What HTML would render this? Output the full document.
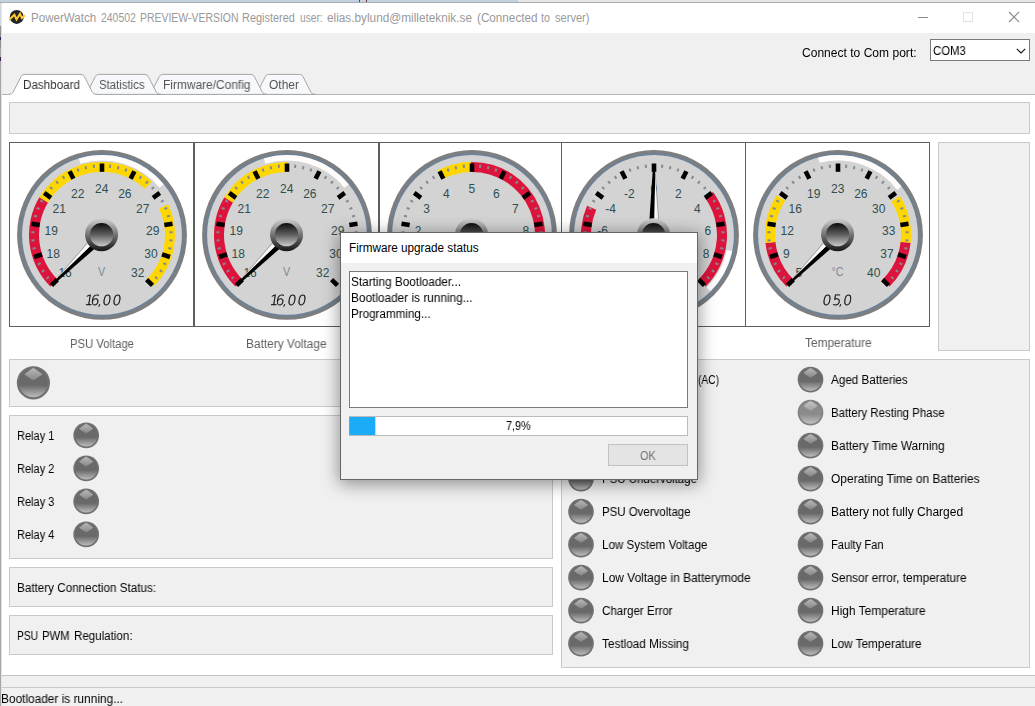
<!DOCTYPE html>
<html lang="en">
<head>
<meta charset="utf-8">
<title>PowerWatch 240502 PREVIEW-VERSION</title>
<style>

html,body{margin:0;padding:0}
body{width:1035px;height:706px;overflow:hidden;background:#fff;font-family:"Liberation Sans","DejaVu Sans",sans-serif;font-size:12px;position:relative}
#win{position:absolute;left:0;top:0;width:1035px;height:706px;overflow:hidden;background:#f0f0f0}
.t{position:absolute;white-space:nowrap;margin:0;padding:0;font-weight:400;font-family:inherit;font-size:12px;line-height:16px;transform-origin:0 50%}
.g{will-change:transform}
#topstrip{position:absolute;left:0;top:0;width:1035px;height:3px;background:#c4d1e1;border-bottom:0;box-sizing:border-box}
#topstrip:after{content:"";position:absolute;left:0;top:2px;width:1035px;height:1px;background:#a8acb0}
#topstrip i{position:absolute;top:0;width:1px;height:2px;background:#6b3a3a}
#topstrip b{position:absolute;left:518px;top:0;width:517px;height:3px;background:linear-gradient(#e6e6e6 0,#e6e6e6 66%,#a4a4a4 66%)}
#leftedge{position:absolute;left:0;top:3px;width:2px;height:703px;background:linear-gradient(90deg,#a6a6a6 0,#a6a6a6 50%,#e4e4e4 50%,#e4e4e4 100%);z-index:5}
#leftedge i{position:absolute;left:0;width:1px}
#titlebar{position:absolute;left:2px;top:3px;width:1033px;height:30px;background:#fff}
#title{position:absolute;left:-2px;top:-3px;margin:0;font-size:12px;font-weight:400}
#appicon{position:absolute;left:7px;top:6px}
.cap{position:absolute;top:0}
#toolbar{position:absolute;left:0;top:33px;width:1035px;height:41px}
#combo{position:absolute;left:930px;top:6px;width:100px;height:22px;box-sizing:border-box;border:1px solid #7a7a7a;background:#fff}
#tabs{position:absolute;left:0;top:0;width:1035px;height:95px}
#tabs svg{position:absolute;left:0;top:70px}
#content{position:absolute;left:2px;top:95px;width:1033px;height:580px;background:#fff}
#content>*{margin-left:-2px;margin-top:-95px}
#content:after{content:"";position:absolute;left:-2px;top:580px;width:1035px;height:1px;background:#c3c3c3}
.panel{position:absolute;box-sizing:border-box;border:1px solid #c9c9c9;background:#f0f0f0}
.gbox{position:absolute;top:142px;height:185px;box-sizing:border-box;border:1px solid #5e5e5e;background:#fff}
#gauges{position:absolute;left:0;top:0}
#gsvg{position:absolute;left:9px;top:142px}
#gdigits{position:absolute;left:9px;top:286px;will-change:transform}
.glab{font-size:12px;fill:#2f4f4f;font-family:"Liberation Sans","DejaVu Sans",sans-serif}
.gunit{font-size:12px;fill:#7d8a98;font-family:"Liberation Sans","DejaVu Sans",sans-serif}
.gdig{font-size:14px;fill:#000;stroke:#000;stroke-width:.4px;stroke-opacity:.8;font-family:"DejaVu Sans Light","DejaVu Sans",sans-serif}
.led{position:absolute;display:block}
#status{position:absolute;left:0;top:687px;width:1035px;height:19px;background:#f0f0f0;border-top:1px solid #c9c9c9;box-sizing:border-box}
#dlgshadow{position:absolute;left:341px;top:233px;width:356px;height:246px;box-shadow:0 3px 16px 2px rgba(0,0,0,.41)}
#dialog{position:absolute;left:340px;top:232px;width:358px;height:248px;box-sizing:border-box;border:1px solid #666;background:#f0f0f0}
#dlgtitle{position:absolute;left:0;top:0;width:356px;height:30px;background:#fff}
#log{position:absolute;left:8px;top:38px;width:339px;height:137px;box-sizing:border-box;border:1px solid #7a7a7a;background:#fff}
#prog{position:absolute;left:8px;top:183px;width:339px;height:20px;box-sizing:border-box;border:1px solid #bcbcbc;background:#fff}
#bar{position:absolute;left:-1px;top:0;width:27px;height:18px;background:linear-gradient(90deg,#5fa9d6 0,#5fa9d6 1px,#1cabf7 1px,#1cabf7 26px,#b4e2fc 26px)}
#ok{position:absolute;left:267px;top:211px;width:80px;height:22px;box-sizing:border-box;border:1px solid #c2c2c2;background:#e4e4e4;padding:0;margin:0;font:inherit}

</style>
</head>
<body>
<div id="win"><svg width="0" height="0" style="position:absolute"><defs><linearGradient id="ledRing" x1="0" y1="0" x2="0" y2="1"><stop offset="0" stop-color="#8c8c8c"/><stop offset="1" stop-color="#7a7a7a"/></linearGradient><linearGradient id="ledFill" x1="0" y1="0" x2="0" y2="1"><stop offset="0" stop-color="#696969"/><stop offset="0.58" stop-color="#696969"/><stop offset="1" stop-color="#bcbcbc"/></linearGradient><linearGradient id="ledHi" x1="0" y1="0" x2="0" y2="1"><stop offset="0" stop-color="#b9b9b9"/><stop offset="1" stop-color="#868686"/></linearGradient><linearGradient id="ledFillL" x1="0" y1="0" x2="0" y2="1"><stop offset="0" stop-color="#8b8b8b"/><stop offset="0.58" stop-color="#8b8b8b"/><stop offset="1" stop-color="#c2c2c2"/></linearGradient><linearGradient id="ledHiL" x1="0" y1="0" x2="0" y2="1"><stop offset="0" stop-color="#c6c6c6"/><stop offset="1" stop-color="#a0a0a0"/></linearGradient></defs></svg>
<div id="topstrip"><i style="left:359px"></i><i style="left:366px"></i><b></b></div>
<div id="leftedge"><i style="top:0;height:23px;background:#d3d9e0"></i><i style="top:23px;height:22px;background:#8f8f8f"></i><i style="top:34px;height:3px;background:#3b1d4e"></i><i style="top:54px;height:4px;background:#3b1d4e"></i></div>
<header id="titlebar">
<svg id="appicon" width="18" height="17" viewBox="0 0 18 17"><circle cx="7.7" cy="7.9" r="7" fill="#242424"/><path d="M0 11L5.4 5.8L7.5 10.4L11 4.9L12.9 9L16 6.2" fill="none" stroke="#ffc931" stroke-width="2" stroke-linejoin="miter" stroke-miterlimit="5"/></svg>
<h1 id="title"><span class="t" style="left:30.70px;top:10px;color:#999;transform:scaleX(0.9648);">PowerWatch</span> <span class="t" style="left:100.60px;top:10px;color:#999;transform:scaleX(0.8690);">240502</span> <span class="t" style="left:139.90px;top:10px;color:#999;transform:scaleX(0.8706);">PREVIEW-VERSION</span> <span class="t" style="left:242.00px;top:10px;color:#999;transform:scaleX(0.9099);">Registered</span> <span class="t" style="left:300.00px;top:10px;color:#999;transform:scaleX(0.8468);">user:</span> <span class="t" style="left:327.40px;top:10px;color:#999;transform:scaleX(0.9824);">elias.bylund@milleteknik.se</span> <span class="t" style="left:476.80px;top:10px;color:#999;transform:scaleX(0.9751);">(Connected</span> <span class="t" style="left:541.10px;top:10px;color:#999;transform:scaleX(0.8886);">to</span> <span class="t" style="left:554.60px;top:10px;color:#999;transform:scaleX(0.9238);">server)</span></h1>
<svg class="cap" style="left:896px" width="139" height="30" viewBox="0 0 139 30"><path d="M20 14.5H30" stroke="#8a8a8a" stroke-width="1" fill="none"/><rect x="65.5" y="9.5" width="9" height="9" stroke="#e2e2e2" stroke-width="1" fill="none"/><path d="M111 9L121 19M121 9L111 19" stroke="#8a8a8a" stroke-width="1.1" fill="none"/></svg>
</header>
<div id="toolbar">
<label class="t g" style="left:802.30px;top:12px;color:#000;letter-spacing:0.028px;">Connect to Com port:</label>
<div id="combo"><span class="t g" style="left:2.30px;top:3px;color:#000;transform:scaleX(0.9460);">COM3</span><svg width="10" height="6" viewBox="0 0 10 6" style="position:absolute;left:85px;top:8px"><path d="M0.8 0.8L5 5L9.2 0.8" fill="none" stroke="#111" stroke-width="1.1"/></svg></div>
</div>
<nav id="tabs">
<svg width="1035" height="26" viewBox="0 0 1035 26"><path d="M0 24.5H1035" stroke="#b4b4b4" stroke-width="1" fill="none"/><path d="M252.7 24.4 Q256.1 24.4 257.4 22.2 L265.3 6.6 Q266.3 4.4 268.7 4.4 L299.6 4.4 Q302.0 4.4 303.0 6.6 L310.9 22.2 Q312.2 24.4 315.6 24.4Z" fill="#f7f8fc" stroke="#a6a6a6" stroke-width="1"/><path d="M146.7 24.4 Q150.1 24.4 151.4 22.2 L159.3 6.6 Q160.3 4.4 162.7 4.4 L251.0 4.4 Q253.4 4.4 254.4 6.6 L262.3 22.2 Q263.6 24.4 267.0 24.4Z" fill="#f7f8fc" stroke="#a6a6a6" stroke-width="1"/><path d="M82.7 24.4 Q86.1 24.4 87.4 22.2 L95.3 6.6 Q96.3 4.4 98.7 4.4 L145.0 4.4 Q147.4 4.4 148.4 6.6 L156.3 22.2 Q157.6 24.4 161.0 24.4Z" fill="#f7f8fc" stroke="#a6a6a6" stroke-width="1"/><path d="M8.4 24.4 Q11.8 24.4 13.1 22.2 L21.0 6.6 Q22.0 4.4 24.4 4.4 L81.0 4.4 Q83.4 4.4 84.4 6.6 L92.3 22.2 Q93.6 24.4 97.0 24.4V26H8Z" fill="#fff" stroke="none"/><path d="M8.4 24.4 Q11.8 24.4 13.1 22.2 L21.0 6.6 Q22.0 4.4 24.4 4.4 L81.0 4.4 Q83.4 4.4 84.4 6.6 L92.3 22.2 Q93.6 24.4 97.0 24.4" fill="none" stroke="#a6a6a6" stroke-width="1"/><path d="M0 24.5H9" stroke="#b4b4b4" stroke-width="1" fill="none"/></svg>
<span class="t g" style="left:23.30px;top:77px;color:#333;transform:scaleX(0.9707);">Dashboard</span>
<span class="t g" style="left:99.30px;top:77px;color:#555;transform:scaleX(0.9497);">Statistics</span>
<span class="t g" style="left:163.20px;top:77px;color:#555;transform:scaleX(0.9940);">Firmware/Config</span>
<span class="t g" style="left:269.00px;top:77px;color:#555;">Other</span>
</nav>
<main id="content">
<div class="panel" style="left:9px;top:102px;width:1021px;height:32px"></div>
<div class="panel" style="left:938px;top:142px;width:92px;height:209px"></div>
<section id="gauges">
<div class="gbox" style="left:9px;width:185px"></div>
<div class="gbox" style="left:194px;width:185px"></div>
<div class="gbox" style="left:379px;width:183px;border-right:none"></div>
<div class="gbox" style="left:561px;width:185px;border-right:none"></div>
<div class="gbox" style="left:745px;width:185px"></div>
<svg id="gsvg" width="921" height="185" viewBox="9 142 921 185">
<defs><linearGradient id="capOuter" x1="0" y1="0" x2="0" y2="1"><stop offset="0" stop-color="#d2d2d2"/><stop offset="0.5" stop-color="#747474"/><stop offset="1" stop-color="#161616"/></linearGradient><linearGradient id="capInner" x1="0" y1="0" x2="0" y2="1"><stop offset="0" stop-color="#0c0c0c"/><stop offset="0.5" stop-color="#5e5e5e"/><stop offset="1" stop-color="#cbcbcb"/></linearGradient></defs>
<g class="gauge">
<linearGradient id="ptrW1" gradientUnits="userSpaceOnUse" x1="102.0" y1="234.9" x2="102.0" y2="240.9"><stop offset="0" stop-color="#ffffff"/><stop offset="0.5" stop-color="#f4f4f4"/><stop offset="1" stop-color="#d6d6d6"/></linearGradient>
<circle cx="102.0" cy="234.9" r="84.9" fill="#7e7e7e"/>
<circle cx="102.0" cy="234.9" r="82.1" fill="#6f8295"/>
<circle cx="102.0" cy="234.9" r="79.9" fill="#d3d3d3"/>
<path d="M78.84 158.54A79.8 79.8 0 0 1 163.69 184.28L159.51 187.70A74.4 74.4 0 0 0 80.40 163.70Z" fill="#fffcfb" />
<path d="M50.38 286.52A73.0 73.0 0 0 1 39.39 197.37L47.96 202.51A63.0 63.0 0 0 0 57.45 279.45Z" fill="#dc143c" />
<path d="M39.39 197.37A73.0 73.0 0 0 1 151.81 181.54L144.99 188.85A63.0 63.0 0 0 0 47.96 202.51Z" fill="#ffd700" />
<path d="M168.23 204.21A73.0 73.0 0 0 1 153.62 286.52L146.55 279.45A63.0 63.0 0 0 0 159.16 208.41Z" fill="#ffd700" />
<rect x="46.15" y="276.71" width="3.10" height="2.0" fill="#868a8e" transform="rotate(141.75 47.70 277.71)"/>
<rect x="41.49" y="270.03" width="3.10" height="2.0" fill="#868a8e" transform="rotate(148.50 43.04 271.03)"/>
<rect x="37.65" y="262.85" width="3.10" height="2.0" fill="#868a8e" transform="rotate(155.25 39.20 263.85)"/>
<rect x="32.63" y="247.39" width="3.10" height="2.0" fill="#868a8e" transform="rotate(168.75 34.18 248.39)"/>
<rect x="31.51" y="239.33" width="3.10" height="2.0" fill="#868a8e" transform="rotate(175.50 33.06 240.33)"/>
<rect x="31.35" y="231.19" width="3.10" height="2.0" fill="#868a8e" transform="rotate(182.25 32.90 232.19)"/>
<rect x="33.90" y="215.13" width="3.10" height="2.0" fill="#868a8e" transform="rotate(195.75 35.45 216.13)"/>
<rect x="36.56" y="207.44" width="3.10" height="2.0" fill="#868a8e" transform="rotate(202.50 38.11 208.44)"/>
<rect x="40.12" y="200.11" width="3.10" height="2.0" fill="#868a8e" transform="rotate(209.25 41.67 201.11)"/>
<rect x="49.67" y="186.96" width="3.10" height="2.0" fill="#868a8e" transform="rotate(222.75 51.22 187.96)"/>
<rect x="55.54" y="181.32" width="3.10" height="2.0" fill="#868a8e" transform="rotate(229.50 57.09 182.32)"/>
<rect x="62.03" y="176.40" width="3.10" height="2.0" fill="#868a8e" transform="rotate(236.25 63.58 177.40)"/>
<rect x="76.52" y="169.02" width="3.10" height="2.0" fill="#868a8e" transform="rotate(249.75 78.07 170.02)"/>
<rect x="84.31" y="166.66" width="3.10" height="2.0" fill="#868a8e" transform="rotate(256.50 85.86 167.66)"/>
<rect x="92.32" y="165.23" width="3.10" height="2.0" fill="#868a8e" transform="rotate(263.25 93.87 166.23)"/>
<rect x="108.58" y="165.23" width="3.10" height="2.0" fill="#868a8e" transform="rotate(276.75 110.13 166.23)"/>
<rect x="116.59" y="166.66" width="3.10" height="2.0" fill="#868a8e" transform="rotate(283.50 118.14 167.66)"/>
<rect x="124.38" y="169.02" width="3.10" height="2.0" fill="#868a8e" transform="rotate(290.25 125.93 170.02)"/>
<rect x="138.87" y="176.40" width="3.10" height="2.0" fill="#868a8e" transform="rotate(303.75 140.42 177.40)"/>
<rect x="145.36" y="181.32" width="3.10" height="2.0" fill="#868a8e" transform="rotate(310.50 146.91 182.32)"/>
<rect x="151.23" y="186.96" width="3.10" height="2.0" fill="#868a8e" transform="rotate(317.25 152.78 187.96)"/>
<rect x="160.78" y="200.11" width="3.10" height="2.0" fill="#868a8e" transform="rotate(330.75 162.33 201.11)"/>
<rect x="164.34" y="207.44" width="3.10" height="2.0" fill="#868a8e" transform="rotate(337.50 165.89 208.44)"/>
<rect x="167.00" y="215.13" width="3.10" height="2.0" fill="#868a8e" transform="rotate(344.25 168.55 216.13)"/>
<rect x="169.55" y="231.19" width="3.10" height="2.0" fill="#868a8e" transform="rotate(357.75 171.10 232.19)"/>
<rect x="169.39" y="239.33" width="3.10" height="2.0" fill="#868a8e" transform="rotate(364.50 170.94 240.33)"/>
<rect x="168.27" y="247.39" width="3.10" height="2.0" fill="#868a8e" transform="rotate(371.25 169.82 248.39)"/>
<rect x="163.25" y="262.85" width="3.10" height="2.0" fill="#868a8e" transform="rotate(384.75 164.80 263.85)"/>
<rect x="159.41" y="270.03" width="3.10" height="2.0" fill="#868a8e" transform="rotate(391.50 160.96 271.03)"/>
<rect x="154.75" y="276.71" width="3.10" height="2.0" fill="#868a8e" transform="rotate(398.25 156.30 277.71)"/>
<rect x="50.30" y="280.15" width="8.30" height="4.6" fill="#000" transform="rotate(135.00 54.45 282.45)"/>
<rect x="33.89" y="253.38" width="8.30" height="4.6" fill="#000" transform="rotate(162.00 38.04 255.68)"/>
<rect x="31.43" y="222.08" width="8.30" height="4.6" fill="#000" transform="rotate(189.00 35.58 224.38)"/>
<rect x="43.44" y="193.07" width="8.30" height="4.6" fill="#000" transform="rotate(216.00 47.59 195.37)"/>
<rect x="67.32" y="172.68" width="8.30" height="4.6" fill="#000" transform="rotate(243.00 71.47 174.98)"/>
<rect x="97.85" y="165.35" width="8.30" height="4.6" fill="#000" transform="rotate(270.00 102.00 167.65)"/>
<rect x="128.38" y="172.68" width="8.30" height="4.6" fill="#000" transform="rotate(297.00 132.53 174.98)"/>
<rect x="152.26" y="193.07" width="8.30" height="4.6" fill="#000" transform="rotate(324.00 156.41 195.37)"/>
<rect x="164.27" y="222.08" width="8.30" height="4.6" fill="#000" transform="rotate(351.00 168.42 224.38)"/>
<rect x="161.81" y="253.38" width="8.30" height="4.6" fill="#000" transform="rotate(378.00 165.96 255.68)"/>
<rect x="145.40" y="280.15" width="8.30" height="4.6" fill="#000" transform="rotate(405.00 149.55 282.45)"/>
<text x="65.10" y="277" text-anchor="middle" class="glab">16</text>
<text x="53.30" y="258" text-anchor="middle" class="glab">18</text>
<text x="51.30" y="235" text-anchor="middle" class="glab">19</text>
<text x="59.30" y="213" text-anchor="middle" class="glab">21</text>
<text x="77.80" y="198" text-anchor="middle" class="glab">22</text>
<text x="101.80" y="193" text-anchor="middle" class="glab">24</text>
<text x="124.85" y="198" text-anchor="middle" class="glab">26</text>
<text x="142.80" y="213" text-anchor="middle" class="glab">27</text>
<text x="152.70" y="235" text-anchor="middle" class="glab">29</text>
<text x="150.90" y="258" text-anchor="middle" class="glab">30</text>
<text x="137.70" y="277" text-anchor="middle" class="glab">32</text>
<text x="101.6" y="276.0" text-anchor="middle" class="gunit" transform="translate(10.16 0) scale(0.9 1)">V</text>
<g transform="rotate(135.00 102.0 234.9)"><path d="M102.0 229.3L170.5 233.9L170.5 235.9L163.0 236.1L102.0 235.1Z" fill="#000"/><path d="M102.0 235.1L163.0 236.1L102.0 240.75Z" fill="url(#ptrW1)"/><path d="M112.0 239.99L163.0 236.1" stroke="#707070" stroke-width=".55" fill="none"/></g>
<circle cx="101.55" cy="234.65" r="16.5" fill="url(#capOuter)"/>
<circle cx="101.55" cy="234.65" r="11.7" fill="url(#capInner)"/>
</g>
<g class="gauge">
<linearGradient id="ptrW2" gradientUnits="userSpaceOnUse" x1="287.0" y1="234.9" x2="287.0" y2="240.9"><stop offset="0" stop-color="#ffffff"/><stop offset="0.5" stop-color="#f4f4f4"/><stop offset="1" stop-color="#d6d6d6"/></linearGradient>
<circle cx="287.0" cy="234.9" r="84.9" fill="#7e7e7e"/>
<circle cx="287.0" cy="234.9" r="82.1" fill="#6f8295"/>
<circle cx="287.0" cy="234.9" r="79.9" fill="#d3d3d3"/>
<path d="M263.84 158.54A79.8 79.8 0 0 1 348.69 184.28L344.51 187.70A74.4 74.4 0 0 0 265.40 163.70Z" fill="#fffcfb" />
<path d="M235.38 286.52A73.0 73.0 0 0 1 224.39 197.37L232.96 202.51A63.0 63.0 0 0 0 242.45 279.45Z" fill="#dc143c" />
<path d="M224.39 197.37A73.0 73.0 0 0 1 288.07 161.91L287.93 171.91A63.0 63.0 0 0 0 232.96 202.51Z" fill="#ffd700" />
<rect x="231.15" y="276.71" width="3.10" height="2.0" fill="#868a8e" transform="rotate(141.75 232.70 277.71)"/>
<rect x="226.49" y="270.03" width="3.10" height="2.0" fill="#868a8e" transform="rotate(148.50 228.04 271.03)"/>
<rect x="222.65" y="262.85" width="3.10" height="2.0" fill="#868a8e" transform="rotate(155.25 224.20 263.85)"/>
<rect x="217.63" y="247.39" width="3.10" height="2.0" fill="#868a8e" transform="rotate(168.75 219.18 248.39)"/>
<rect x="216.51" y="239.33" width="3.10" height="2.0" fill="#868a8e" transform="rotate(175.50 218.06 240.33)"/>
<rect x="216.35" y="231.19" width="3.10" height="2.0" fill="#868a8e" transform="rotate(182.25 217.90 232.19)"/>
<rect x="218.90" y="215.13" width="3.10" height="2.0" fill="#868a8e" transform="rotate(195.75 220.45 216.13)"/>
<rect x="221.56" y="207.44" width="3.10" height="2.0" fill="#868a8e" transform="rotate(202.50 223.11 208.44)"/>
<rect x="225.12" y="200.11" width="3.10" height="2.0" fill="#868a8e" transform="rotate(209.25 226.67 201.11)"/>
<rect x="234.67" y="186.96" width="3.10" height="2.0" fill="#868a8e" transform="rotate(222.75 236.22 187.96)"/>
<rect x="240.54" y="181.32" width="3.10" height="2.0" fill="#868a8e" transform="rotate(229.50 242.09 182.32)"/>
<rect x="247.03" y="176.40" width="3.10" height="2.0" fill="#868a8e" transform="rotate(236.25 248.58 177.40)"/>
<rect x="261.52" y="169.02" width="3.10" height="2.0" fill="#868a8e" transform="rotate(249.75 263.07 170.02)"/>
<rect x="269.31" y="166.66" width="3.10" height="2.0" fill="#868a8e" transform="rotate(256.50 270.86 167.66)"/>
<rect x="277.32" y="165.23" width="3.10" height="2.0" fill="#868a8e" transform="rotate(263.25 278.87 166.23)"/>
<rect x="293.58" y="165.23" width="3.10" height="2.0" fill="#868a8e" transform="rotate(276.75 295.13 166.23)"/>
<rect x="301.59" y="166.66" width="3.10" height="2.0" fill="#868a8e" transform="rotate(283.50 303.14 167.66)"/>
<rect x="309.38" y="169.02" width="3.10" height="2.0" fill="#868a8e" transform="rotate(290.25 310.93 170.02)"/>
<rect x="323.87" y="176.40" width="3.10" height="2.0" fill="#868a8e" transform="rotate(303.75 325.42 177.40)"/>
<rect x="330.36" y="181.32" width="3.10" height="2.0" fill="#868a8e" transform="rotate(310.50 331.91 182.32)"/>
<rect x="336.23" y="186.96" width="3.10" height="2.0" fill="#868a8e" transform="rotate(317.25 337.78 187.96)"/>
<rect x="345.78" y="200.11" width="3.10" height="2.0" fill="#868a8e" transform="rotate(330.75 347.33 201.11)"/>
<rect x="349.34" y="207.44" width="3.10" height="2.0" fill="#868a8e" transform="rotate(337.50 350.89 208.44)"/>
<rect x="352.00" y="215.13" width="3.10" height="2.0" fill="#868a8e" transform="rotate(344.25 353.55 216.13)"/>
<rect x="354.55" y="231.19" width="3.10" height="2.0" fill="#868a8e" transform="rotate(357.75 356.10 232.19)"/>
<rect x="354.39" y="239.33" width="3.10" height="2.0" fill="#868a8e" transform="rotate(364.50 355.94 240.33)"/>
<rect x="353.27" y="247.39" width="3.10" height="2.0" fill="#868a8e" transform="rotate(371.25 354.82 248.39)"/>
<rect x="348.25" y="262.85" width="3.10" height="2.0" fill="#868a8e" transform="rotate(384.75 349.80 263.85)"/>
<rect x="344.41" y="270.03" width="3.10" height="2.0" fill="#868a8e" transform="rotate(391.50 345.96 271.03)"/>
<rect x="339.75" y="276.71" width="3.10" height="2.0" fill="#868a8e" transform="rotate(398.25 341.30 277.71)"/>
<rect x="235.30" y="280.15" width="8.30" height="4.6" fill="#000" transform="rotate(135.00 239.45 282.45)"/>
<rect x="218.89" y="253.38" width="8.30" height="4.6" fill="#000" transform="rotate(162.00 223.04 255.68)"/>
<rect x="216.43" y="222.08" width="8.30" height="4.6" fill="#000" transform="rotate(189.00 220.58 224.38)"/>
<rect x="228.44" y="193.07" width="8.30" height="4.6" fill="#000" transform="rotate(216.00 232.59 195.37)"/>
<rect x="252.32" y="172.68" width="8.30" height="4.6" fill="#000" transform="rotate(243.00 256.47 174.98)"/>
<rect x="282.85" y="165.35" width="8.30" height="4.6" fill="#000" transform="rotate(270.00 287.00 167.65)"/>
<rect x="313.38" y="172.68" width="8.30" height="4.6" fill="#000" transform="rotate(297.00 317.53 174.98)"/>
<rect x="337.26" y="193.07" width="8.30" height="4.6" fill="#000" transform="rotate(324.00 341.41 195.37)"/>
<rect x="349.27" y="222.08" width="8.30" height="4.6" fill="#000" transform="rotate(351.00 353.42 224.38)"/>
<rect x="346.81" y="253.38" width="8.30" height="4.6" fill="#000" transform="rotate(378.00 350.96 255.68)"/>
<rect x="330.40" y="280.15" width="8.30" height="4.6" fill="#000" transform="rotate(405.00 334.55 282.45)"/>
<text x="250.10" y="277" text-anchor="middle" class="glab">16</text>
<text x="238.30" y="258" text-anchor="middle" class="glab">18</text>
<text x="236.30" y="235" text-anchor="middle" class="glab">19</text>
<text x="244.30" y="213" text-anchor="middle" class="glab">21</text>
<text x="262.80" y="198" text-anchor="middle" class="glab">22</text>
<text x="286.80" y="193" text-anchor="middle" class="glab">24</text>
<text x="309.85" y="198" text-anchor="middle" class="glab">26</text>
<text x="327.80" y="213" text-anchor="middle" class="glab">27</text>
<text x="337.70" y="235" text-anchor="middle" class="glab">29</text>
<text x="335.90" y="258" text-anchor="middle" class="glab">30</text>
<text x="322.70" y="277" text-anchor="middle" class="glab">32</text>
<text x="286.6" y="276.0" text-anchor="middle" class="gunit" transform="translate(28.66 0) scale(0.9 1)">V</text>
<g transform="rotate(135.00 287.0 234.9)"><path d="M287.0 229.3L355.5 233.9L355.5 235.9L348.0 236.1L287.0 235.1Z" fill="#000"/><path d="M287.0 235.1L348.0 236.1L287.0 240.75Z" fill="url(#ptrW2)"/><path d="M297.0 239.99L348.0 236.1" stroke="#707070" stroke-width=".55" fill="none"/></g>
<circle cx="286.55" cy="234.65" r="16.5" fill="url(#capOuter)"/>
<circle cx="286.55" cy="234.65" r="11.7" fill="url(#capInner)"/>
</g>
<g class="gauge">
<linearGradient id="ptrW3" gradientUnits="userSpaceOnUse" x1="472.0" y1="234.9" x2="472.0" y2="240.9"><stop offset="0" stop-color="#ffffff"/><stop offset="0.5" stop-color="#f4f4f4"/><stop offset="1" stop-color="#d6d6d6"/></linearGradient>
<circle cx="472.0" cy="234.9" r="84.9" fill="#7e7e7e"/>
<circle cx="472.0" cy="234.9" r="82.1" fill="#6f8295"/>
<circle cx="472.0" cy="234.9" r="79.9" fill="#d3d3d3"/>
<path d="M437.94 170.33A73.0 73.0 0 0 1 470.97 161.91L471.11 171.91A63.0 63.0 0 0 0 442.61 179.18Z" fill="#ffd700" />
<path d="M470.97 161.91A73.0 73.0 0 0 1 523.62 286.52L516.55 279.45A63.0 63.0 0 0 0 471.11 171.91Z" fill="#dc143c" />
<rect x="416.15" y="276.71" width="3.10" height="2.0" fill="#868a8e" transform="rotate(141.75 417.70 277.71)"/>
<rect x="411.49" y="270.03" width="3.10" height="2.0" fill="#868a8e" transform="rotate(148.50 413.04 271.03)"/>
<rect x="407.65" y="262.85" width="3.10" height="2.0" fill="#868a8e" transform="rotate(155.25 409.20 263.85)"/>
<rect x="402.63" y="247.39" width="3.10" height="2.0" fill="#868a8e" transform="rotate(168.75 404.18 248.39)"/>
<rect x="401.51" y="239.33" width="3.10" height="2.0" fill="#868a8e" transform="rotate(175.50 403.06 240.33)"/>
<rect x="401.35" y="231.19" width="3.10" height="2.0" fill="#868a8e" transform="rotate(182.25 402.90 232.19)"/>
<rect x="403.90" y="215.13" width="3.10" height="2.0" fill="#868a8e" transform="rotate(195.75 405.45 216.13)"/>
<rect x="406.56" y="207.44" width="3.10" height="2.0" fill="#868a8e" transform="rotate(202.50 408.11 208.44)"/>
<rect x="410.12" y="200.11" width="3.10" height="2.0" fill="#868a8e" transform="rotate(209.25 411.67 201.11)"/>
<rect x="419.67" y="186.96" width="3.10" height="2.0" fill="#868a8e" transform="rotate(222.75 421.22 187.96)"/>
<rect x="425.54" y="181.32" width="3.10" height="2.0" fill="#868a8e" transform="rotate(229.50 427.09 182.32)"/>
<rect x="432.03" y="176.40" width="3.10" height="2.0" fill="#868a8e" transform="rotate(236.25 433.58 177.40)"/>
<rect x="446.52" y="169.02" width="3.10" height="2.0" fill="#868a8e" transform="rotate(249.75 448.07 170.02)"/>
<rect x="454.31" y="166.66" width="3.10" height="2.0" fill="#868a8e" transform="rotate(256.50 455.86 167.66)"/>
<rect x="462.32" y="165.23" width="3.10" height="2.0" fill="#868a8e" transform="rotate(263.25 463.87 166.23)"/>
<rect x="478.58" y="165.23" width="3.10" height="2.0" fill="#868a8e" transform="rotate(276.75 480.13 166.23)"/>
<rect x="486.59" y="166.66" width="3.10" height="2.0" fill="#868a8e" transform="rotate(283.50 488.14 167.66)"/>
<rect x="494.38" y="169.02" width="3.10" height="2.0" fill="#868a8e" transform="rotate(290.25 495.93 170.02)"/>
<rect x="508.87" y="176.40" width="3.10" height="2.0" fill="#868a8e" transform="rotate(303.75 510.42 177.40)"/>
<rect x="515.36" y="181.32" width="3.10" height="2.0" fill="#868a8e" transform="rotate(310.50 516.91 182.32)"/>
<rect x="521.23" y="186.96" width="3.10" height="2.0" fill="#868a8e" transform="rotate(317.25 522.78 187.96)"/>
<rect x="530.78" y="200.11" width="3.10" height="2.0" fill="#868a8e" transform="rotate(330.75 532.33 201.11)"/>
<rect x="534.34" y="207.44" width="3.10" height="2.0" fill="#868a8e" transform="rotate(337.50 535.89 208.44)"/>
<rect x="537.00" y="215.13" width="3.10" height="2.0" fill="#868a8e" transform="rotate(344.25 538.55 216.13)"/>
<rect x="539.55" y="231.19" width="3.10" height="2.0" fill="#868a8e" transform="rotate(357.75 541.10 232.19)"/>
<rect x="539.39" y="239.33" width="3.10" height="2.0" fill="#868a8e" transform="rotate(364.50 540.94 240.33)"/>
<rect x="538.27" y="247.39" width="3.10" height="2.0" fill="#868a8e" transform="rotate(371.25 539.82 248.39)"/>
<rect x="533.25" y="262.85" width="3.10" height="2.0" fill="#868a8e" transform="rotate(384.75 534.80 263.85)"/>
<rect x="529.41" y="270.03" width="3.10" height="2.0" fill="#868a8e" transform="rotate(391.50 530.96 271.03)"/>
<rect x="524.75" y="276.71" width="3.10" height="2.0" fill="#868a8e" transform="rotate(398.25 526.30 277.71)"/>
<rect x="420.30" y="280.15" width="8.30" height="4.6" fill="#000" transform="rotate(135.00 424.45 282.45)"/>
<rect x="403.89" y="253.38" width="8.30" height="4.6" fill="#000" transform="rotate(162.00 408.04 255.68)"/>
<rect x="401.43" y="222.08" width="8.30" height="4.6" fill="#000" transform="rotate(189.00 405.58 224.38)"/>
<rect x="413.44" y="193.07" width="8.30" height="4.6" fill="#000" transform="rotate(216.00 417.59 195.37)"/>
<rect x="437.32" y="172.68" width="8.30" height="4.6" fill="#000" transform="rotate(243.00 441.47 174.98)"/>
<rect x="467.85" y="165.35" width="8.30" height="4.6" fill="#000" transform="rotate(270.00 472.00 167.65)"/>
<rect x="498.38" y="172.68" width="8.30" height="4.6" fill="#000" transform="rotate(297.00 502.53 174.98)"/>
<rect x="522.26" y="193.07" width="8.30" height="4.6" fill="#000" transform="rotate(324.00 526.41 195.37)"/>
<rect x="534.27" y="222.08" width="8.30" height="4.6" fill="#000" transform="rotate(351.00 538.42 224.38)"/>
<rect x="531.81" y="253.38" width="8.30" height="4.6" fill="#000" transform="rotate(378.00 535.96 255.68)"/>
<rect x="515.40" y="280.15" width="8.30" height="4.6" fill="#000" transform="rotate(405.00 519.55 282.45)"/>
<text x="432.81" y="277" text-anchor="middle" class="glab">0</text>
<text x="420.22" y="258" text-anchor="middle" class="glab">1</text>
<text x="418.10" y="235" text-anchor="middle" class="glab">2</text>
<text x="426.68" y="213" text-anchor="middle" class="glab">3</text>
<text x="446.33" y="198" text-anchor="middle" class="glab">4</text>
<text x="471.80" y="193" text-anchor="middle" class="glab">5</text>
<text x="496.32" y="198" text-anchor="middle" class="glab">6</text>
<text x="515.42" y="213" text-anchor="middle" class="glab">7</text>
<text x="525.90" y="235" text-anchor="middle" class="glab">8</text>
<text x="523.98" y="258" text-anchor="middle" class="glab">9</text>
<text x="507.70" y="277" text-anchor="middle" class="glab">10</text>
<text x="471.6" y="276.0" text-anchor="middle" class="gunit" transform="translate(47.16 0) scale(0.9 1)">A</text>
<g transform="rotate(135.00 472.0 234.9)"><path d="M472.0 229.3L540.5 233.9L540.5 235.9L533.0 236.1L472.0 235.1Z" fill="#000"/><path d="M472.0 235.1L533.0 236.1L472.0 240.75Z" fill="url(#ptrW3)"/><path d="M482.0 239.99L533.0 236.1" stroke="#707070" stroke-width=".55" fill="none"/></g>
<circle cx="471.55" cy="234.65" r="16.5" fill="url(#capOuter)"/>
<circle cx="471.55" cy="234.65" r="11.7" fill="url(#capInner)"/>
</g>
<g class="gauge">
<linearGradient id="ptrW4" gradientUnits="userSpaceOnUse" x1="654.0" y1="234.9" x2="654.0" y2="240.9"><stop offset="0" stop-color="#ffffff"/><stop offset="0.5" stop-color="#f4f4f4"/><stop offset="1" stop-color="#d6d6d6"/></linearGradient>
<circle cx="654.0" cy="234.9" r="84.9" fill="#7e7e7e"/>
<circle cx="654.0" cy="234.9" r="82.1" fill="#6f8295"/>
<circle cx="654.0" cy="234.9" r="79.9" fill="#d3d3d3"/>
<path d="M732.12 251.21A79.8 79.8 0 0 1 710.43 291.33L706.61 287.51A74.4 74.4 0 0 0 726.83 250.10Z" fill="#fffcfb" />
<path d="M602.38 286.52A73.0 73.0 0 0 1 587.03 205.86L596.20 209.83A63.0 63.0 0 0 0 609.45 279.45Z" fill="#dc143c" />
<path d="M713.06 191.99A73.0 73.0 0 0 1 705.62 286.52L698.55 279.45A63.0 63.0 0 0 0 704.97 197.87Z" fill="#dc143c" />
<rect x="598.15" y="276.71" width="3.10" height="2.0" fill="#868a8e" transform="rotate(141.75 599.70 277.71)"/>
<rect x="593.49" y="270.03" width="3.10" height="2.0" fill="#868a8e" transform="rotate(148.50 595.04 271.03)"/>
<rect x="589.65" y="262.85" width="3.10" height="2.0" fill="#868a8e" transform="rotate(155.25 591.20 263.85)"/>
<rect x="584.63" y="247.39" width="3.10" height="2.0" fill="#868a8e" transform="rotate(168.75 586.18 248.39)"/>
<rect x="583.51" y="239.33" width="3.10" height="2.0" fill="#868a8e" transform="rotate(175.50 585.06 240.33)"/>
<rect x="583.35" y="231.19" width="3.10" height="2.0" fill="#868a8e" transform="rotate(182.25 584.90 232.19)"/>
<rect x="585.90" y="215.13" width="3.10" height="2.0" fill="#868a8e" transform="rotate(195.75 587.45 216.13)"/>
<rect x="588.56" y="207.44" width="3.10" height="2.0" fill="#868a8e" transform="rotate(202.50 590.11 208.44)"/>
<rect x="592.12" y="200.11" width="3.10" height="2.0" fill="#868a8e" transform="rotate(209.25 593.67 201.11)"/>
<rect x="601.67" y="186.96" width="3.10" height="2.0" fill="#868a8e" transform="rotate(222.75 603.22 187.96)"/>
<rect x="607.54" y="181.32" width="3.10" height="2.0" fill="#868a8e" transform="rotate(229.50 609.09 182.32)"/>
<rect x="614.03" y="176.40" width="3.10" height="2.0" fill="#868a8e" transform="rotate(236.25 615.58 177.40)"/>
<rect x="628.52" y="169.02" width="3.10" height="2.0" fill="#868a8e" transform="rotate(249.75 630.07 170.02)"/>
<rect x="636.31" y="166.66" width="3.10" height="2.0" fill="#868a8e" transform="rotate(256.50 637.86 167.66)"/>
<rect x="644.32" y="165.23" width="3.10" height="2.0" fill="#868a8e" transform="rotate(263.25 645.87 166.23)"/>
<rect x="660.58" y="165.23" width="3.10" height="2.0" fill="#868a8e" transform="rotate(276.75 662.13 166.23)"/>
<rect x="668.59" y="166.66" width="3.10" height="2.0" fill="#868a8e" transform="rotate(283.50 670.14 167.66)"/>
<rect x="676.38" y="169.02" width="3.10" height="2.0" fill="#868a8e" transform="rotate(290.25 677.93 170.02)"/>
<rect x="690.87" y="176.40" width="3.10" height="2.0" fill="#868a8e" transform="rotate(303.75 692.42 177.40)"/>
<rect x="697.36" y="181.32" width="3.10" height="2.0" fill="#868a8e" transform="rotate(310.50 698.91 182.32)"/>
<rect x="703.23" y="186.96" width="3.10" height="2.0" fill="#868a8e" transform="rotate(317.25 704.78 187.96)"/>
<rect x="712.78" y="200.11" width="3.10" height="2.0" fill="#868a8e" transform="rotate(330.75 714.33 201.11)"/>
<rect x="716.34" y="207.44" width="3.10" height="2.0" fill="#868a8e" transform="rotate(337.50 717.89 208.44)"/>
<rect x="719.00" y="215.13" width="3.10" height="2.0" fill="#868a8e" transform="rotate(344.25 720.55 216.13)"/>
<rect x="721.55" y="231.19" width="3.10" height="2.0" fill="#868a8e" transform="rotate(357.75 723.10 232.19)"/>
<rect x="721.39" y="239.33" width="3.10" height="2.0" fill="#868a8e" transform="rotate(364.50 722.94 240.33)"/>
<rect x="720.27" y="247.39" width="3.10" height="2.0" fill="#868a8e" transform="rotate(371.25 721.82 248.39)"/>
<rect x="715.25" y="262.85" width="3.10" height="2.0" fill="#868a8e" transform="rotate(384.75 716.80 263.85)"/>
<rect x="711.41" y="270.03" width="3.10" height="2.0" fill="#868a8e" transform="rotate(391.50 712.96 271.03)"/>
<rect x="706.75" y="276.71" width="3.10" height="2.0" fill="#868a8e" transform="rotate(398.25 708.30 277.71)"/>
<rect x="602.30" y="280.15" width="8.30" height="4.6" fill="#000" transform="rotate(135.00 606.45 282.45)"/>
<rect x="585.89" y="253.38" width="8.30" height="4.6" fill="#000" transform="rotate(162.00 590.04 255.68)"/>
<rect x="583.43" y="222.08" width="8.30" height="4.6" fill="#000" transform="rotate(189.00 587.58 224.38)"/>
<rect x="595.44" y="193.07" width="8.30" height="4.6" fill="#000" transform="rotate(216.00 599.59 195.37)"/>
<rect x="619.32" y="172.68" width="8.30" height="4.6" fill="#000" transform="rotate(243.00 623.47 174.98)"/>
<rect x="649.85" y="165.35" width="8.30" height="4.6" fill="#000" transform="rotate(270.00 654.00 167.65)"/>
<rect x="680.38" y="172.68" width="8.30" height="4.6" fill="#000" transform="rotate(297.00 684.53 174.98)"/>
<rect x="704.26" y="193.07" width="8.30" height="4.6" fill="#000" transform="rotate(324.00 708.41 195.37)"/>
<rect x="716.27" y="222.08" width="8.30" height="4.6" fill="#000" transform="rotate(351.00 720.42 224.38)"/>
<rect x="713.81" y="253.38" width="8.30" height="4.6" fill="#000" transform="rotate(378.00 717.96 255.68)"/>
<rect x="697.40" y="280.15" width="8.30" height="4.6" fill="#000" transform="rotate(405.00 701.55 282.45)"/>
<text x="618.80" y="277" text-anchor="middle" class="glab">-10</text>
<text x="604.51" y="258" text-anchor="middle" class="glab">-8</text>
<text x="602.48" y="235" text-anchor="middle" class="glab">-6</text>
<text x="610.62" y="213" text-anchor="middle" class="glab">-4</text>
<text x="629.42" y="198" text-anchor="middle" class="glab">-2</text>
<text x="653.80" y="193" text-anchor="middle" class="glab">0</text>
<text x="678.32" y="198" text-anchor="middle" class="glab">2</text>
<text x="697.42" y="213" text-anchor="middle" class="glab">4</text>
<text x="707.90" y="235" text-anchor="middle" class="glab">6</text>
<text x="705.98" y="258" text-anchor="middle" class="glab">8</text>
<text x="689.70" y="277" text-anchor="middle" class="glab">10</text>
<text x="653.6" y="276.0" text-anchor="middle" class="gunit" transform="translate(65.36 0) scale(0.9 1)">A</text>
<g transform="rotate(270.00 654.0 234.9)"><path d="M654.0 229.3L722.5 233.9L722.5 235.9L715.0 236.1L654.0 235.1Z" fill="#000"/><path d="M654.0 235.1L715.0 236.1L654.0 240.75Z" fill="url(#ptrW4)"/><path d="M664.0 239.99L715.0 236.1" stroke="#707070" stroke-width=".55" fill="none"/></g>
<circle cx="653.55" cy="234.65" r="16.5" fill="url(#capOuter)"/>
<circle cx="653.55" cy="234.65" r="11.7" fill="url(#capInner)"/>
</g>
<g class="gauge">
<linearGradient id="ptrW5" gradientUnits="userSpaceOnUse" x1="838.0" y1="234.9" x2="838.0" y2="240.9"><stop offset="0" stop-color="#ffffff"/><stop offset="0.5" stop-color="#f4f4f4"/><stop offset="1" stop-color="#d6d6d6"/></linearGradient>
<circle cx="838.0" cy="234.9" r="84.9" fill="#7e7e7e"/>
<circle cx="838.0" cy="234.9" r="82.1" fill="#6f8295"/>
<circle cx="838.0" cy="234.9" r="79.9" fill="#d3d3d3"/>
<path d="M818.22 157.59A79.8 79.8 0 0 1 901.53 186.61L897.23 189.88A74.4 74.4 0 0 0 819.56 162.82Z" fill="#fffcfb" />
<path d="M786.38 286.52A73.0 73.0 0 0 1 765.46 243.07L775.40 241.95A63.0 63.0 0 0 0 793.45 279.45Z" fill="#dc143c" />
<path d="M765.46 243.07A73.0 73.0 0 0 1 776.72 195.23L785.11 200.67A63.0 63.0 0 0 0 775.40 241.95Z" fill="#ffd700" />
<path d="M899.81 196.06A73.0 73.0 0 0 1 910.54 243.07L900.60 241.95A63.0 63.0 0 0 0 891.34 201.38Z" fill="#ffd700" />
<path d="M910.54 243.07A73.0 73.0 0 0 1 889.62 286.52L882.55 279.45A63.0 63.0 0 0 0 900.60 241.95Z" fill="#dc143c" />
<rect x="782.15" y="276.71" width="3.10" height="2.0" fill="#868a8e" transform="rotate(141.75 783.70 277.71)"/>
<rect x="777.49" y="270.03" width="3.10" height="2.0" fill="#868a8e" transform="rotate(148.50 779.04 271.03)"/>
<rect x="773.65" y="262.85" width="3.10" height="2.0" fill="#868a8e" transform="rotate(155.25 775.20 263.85)"/>
<rect x="768.63" y="247.39" width="3.10" height="2.0" fill="#868a8e" transform="rotate(168.75 770.18 248.39)"/>
<rect x="767.51" y="239.33" width="3.10" height="2.0" fill="#868a8e" transform="rotate(175.50 769.06 240.33)"/>
<rect x="767.35" y="231.19" width="3.10" height="2.0" fill="#868a8e" transform="rotate(182.25 768.90 232.19)"/>
<rect x="769.90" y="215.13" width="3.10" height="2.0" fill="#868a8e" transform="rotate(195.75 771.45 216.13)"/>
<rect x="772.56" y="207.44" width="3.10" height="2.0" fill="#868a8e" transform="rotate(202.50 774.11 208.44)"/>
<rect x="776.12" y="200.11" width="3.10" height="2.0" fill="#868a8e" transform="rotate(209.25 777.67 201.11)"/>
<rect x="785.67" y="186.96" width="3.10" height="2.0" fill="#868a8e" transform="rotate(222.75 787.22 187.96)"/>
<rect x="791.54" y="181.32" width="3.10" height="2.0" fill="#868a8e" transform="rotate(229.50 793.09 182.32)"/>
<rect x="798.03" y="176.40" width="3.10" height="2.0" fill="#868a8e" transform="rotate(236.25 799.58 177.40)"/>
<rect x="812.52" y="169.02" width="3.10" height="2.0" fill="#868a8e" transform="rotate(249.75 814.07 170.02)"/>
<rect x="820.31" y="166.66" width="3.10" height="2.0" fill="#868a8e" transform="rotate(256.50 821.86 167.66)"/>
<rect x="828.32" y="165.23" width="3.10" height="2.0" fill="#868a8e" transform="rotate(263.25 829.87 166.23)"/>
<rect x="844.58" y="165.23" width="3.10" height="2.0" fill="#868a8e" transform="rotate(276.75 846.13 166.23)"/>
<rect x="852.59" y="166.66" width="3.10" height="2.0" fill="#868a8e" transform="rotate(283.50 854.14 167.66)"/>
<rect x="860.38" y="169.02" width="3.10" height="2.0" fill="#868a8e" transform="rotate(290.25 861.93 170.02)"/>
<rect x="874.87" y="176.40" width="3.10" height="2.0" fill="#868a8e" transform="rotate(303.75 876.42 177.40)"/>
<rect x="881.36" y="181.32" width="3.10" height="2.0" fill="#868a8e" transform="rotate(310.50 882.91 182.32)"/>
<rect x="887.23" y="186.96" width="3.10" height="2.0" fill="#868a8e" transform="rotate(317.25 888.78 187.96)"/>
<rect x="896.78" y="200.11" width="3.10" height="2.0" fill="#868a8e" transform="rotate(330.75 898.33 201.11)"/>
<rect x="900.34" y="207.44" width="3.10" height="2.0" fill="#868a8e" transform="rotate(337.50 901.89 208.44)"/>
<rect x="903.00" y="215.13" width="3.10" height="2.0" fill="#868a8e" transform="rotate(344.25 904.55 216.13)"/>
<rect x="905.55" y="231.19" width="3.10" height="2.0" fill="#868a8e" transform="rotate(357.75 907.10 232.19)"/>
<rect x="905.39" y="239.33" width="3.10" height="2.0" fill="#868a8e" transform="rotate(364.50 906.94 240.33)"/>
<rect x="904.27" y="247.39" width="3.10" height="2.0" fill="#868a8e" transform="rotate(371.25 905.82 248.39)"/>
<rect x="899.25" y="262.85" width="3.10" height="2.0" fill="#868a8e" transform="rotate(384.75 900.80 263.85)"/>
<rect x="895.41" y="270.03" width="3.10" height="2.0" fill="#868a8e" transform="rotate(391.50 896.96 271.03)"/>
<rect x="890.75" y="276.71" width="3.10" height="2.0" fill="#868a8e" transform="rotate(398.25 892.30 277.71)"/>
<rect x="786.30" y="280.15" width="8.30" height="4.6" fill="#000" transform="rotate(135.00 790.45 282.45)"/>
<rect x="769.89" y="253.38" width="8.30" height="4.6" fill="#000" transform="rotate(162.00 774.04 255.68)"/>
<rect x="767.43" y="222.08" width="8.30" height="4.6" fill="#000" transform="rotate(189.00 771.58 224.38)"/>
<rect x="779.44" y="193.07" width="8.30" height="4.6" fill="#000" transform="rotate(216.00 783.59 195.37)"/>
<rect x="803.32" y="172.68" width="8.30" height="4.6" fill="#000" transform="rotate(243.00 807.47 174.98)"/>
<rect x="833.85" y="165.35" width="8.30" height="4.6" fill="#000" transform="rotate(270.00 838.00 167.65)"/>
<rect x="864.38" y="172.68" width="8.30" height="4.6" fill="#000" transform="rotate(297.00 868.53 174.98)"/>
<rect x="888.26" y="193.07" width="8.30" height="4.6" fill="#000" transform="rotate(324.00 892.41 195.37)"/>
<rect x="900.27" y="222.08" width="8.30" height="4.6" fill="#000" transform="rotate(351.00 904.42 224.38)"/>
<rect x="897.81" y="253.38" width="8.30" height="4.6" fill="#000" transform="rotate(378.00 901.96 255.68)"/>
<rect x="881.40" y="280.15" width="8.30" height="4.6" fill="#000" transform="rotate(405.00 885.55 282.45)"/>
<text x="798.81" y="277" text-anchor="middle" class="glab">5</text>
<text x="786.22" y="258" text-anchor="middle" class="glab">9</text>
<text x="787.30" y="235" text-anchor="middle" class="glab">12</text>
<text x="795.30" y="213" text-anchor="middle" class="glab">16</text>
<text x="813.80" y="198" text-anchor="middle" class="glab">19</text>
<text x="837.80" y="193" text-anchor="middle" class="glab">23</text>
<text x="860.85" y="198" text-anchor="middle" class="glab">26</text>
<text x="878.80" y="213" text-anchor="middle" class="glab">30</text>
<text x="888.70" y="235" text-anchor="middle" class="glab">33</text>
<text x="886.90" y="258" text-anchor="middle" class="glab">37</text>
<text x="873.70" y="277" text-anchor="middle" class="glab">40</text>
<text x="837.6" y="276.0" text-anchor="middle" class="gunit" transform="translate(83.76 0) scale(0.9 1)">°C</text>
<g transform="rotate(135.00 838.0 234.9)"><path d="M838.0 229.3L906.5 233.9L906.5 235.9L899.0 236.1L838.0 235.1Z" fill="#000"/><path d="M838.0 235.1L899.0 236.1L838.0 240.75Z" fill="url(#ptrW5)"/><path d="M848.0 239.99L899.0 236.1" stroke="#707070" stroke-width=".55" fill="none"/></g>
<circle cx="837.55" cy="234.65" r="16.5" fill="url(#capOuter)"/>
<circle cx="837.55" cy="234.65" r="11.7" fill="url(#capInner)"/>
</g>
</svg>
<svg id="gdigits" width="921" height="40" viewBox="9 286 921 40"><text x="84.75 90.85 97.97 102.45 112.45" y="304.8" class="gdig" transform="translate(47.56 0) skewX(-9)">16,00</text><text x="269.75 275.85 282.97 287.45 297.45" y="304.8" class="gdig" transform="translate(47.56 0) skewX(-9)">16,00</text><text x="454.75 460.85 467.97 472.45 482.45" y="304.8" class="gdig" transform="translate(47.56 0) skewX(-9)">00,00</text><text x="636.75 642.85 649.97 654.45 664.45" y="304.8" class="gdig" transform="translate(47.56 0) skewX(-9)">00,00</text><text x="822.35 832.55 838.87 843.35" y="304.8" class="gdig" transform="translate(47.56 0) skewX(-9)">05,0</text></svg>
<span class="t g" style="left:69.60px;top:336px;color:#606060;transform:scaleX(0.9405);">PSU Voltage</span>
<span class="t g" style="left:246.40px;top:336px;color:#606060;transform:scaleX(0.9903);">Battery Voltage</span>
<span class="t g" style="left:429.00px;top:336px;color:#606060;letter-spacing:0.022px;">Charge Current</span>
<span class="t g" style="left:619.00px;top:336px;color:#606060;">Load Current</span>
<span class="t g" style="left:805.20px;top:335px;color:#606060;transform:scaleX(0.9885);">Temperature</span>
</section>
<div class="panel" style="left:9px;top:359px;width:544px;height:48px"><svg class="led" style="left:5px;top:5px" width="37" height="37" viewBox="0 0 37 37"><circle cx="18.40" cy="17.85" r="16.6" fill="#717171"/><circle cx="18.40" cy="17.85" r="14.44" fill="url(#ledFill)"/><path d="M18.40 2.91Q19.73 3.24 27.53 9.22Q19.73 14.86 18.40 15.36Q17.07 14.86 9.27 9.22Q17.07 3.24 18.40 2.91Z" fill="url(#ledHi)"/></svg></div>
<div class="panel" style="left:9px;top:415px;width:544px;height:144px">
<span class="t g" style="left:7.10px;top:12px;color:#000;transform:scaleX(0.9167);">Relay 1</span>
<svg class="led" style="left:62px;top:5px" width="29" height="29" viewBox="0 0 29 29"><circle cx="14.20" cy="14.40" r="12.85" fill="#717171"/><circle cx="14.20" cy="14.40" r="11.18" fill="url(#ledFill)"/><path d="M14.20 2.83Q15.23 3.09 21.27 7.72Q15.23 12.09 14.20 12.47Q13.17 12.09 7.13 7.72Q13.17 3.09 14.20 2.83Z" fill="url(#ledHi)"/></svg>
<span class="t g" style="left:7.10px;top:45px;color:#000;transform:scaleX(0.9167);">Relay 2</span>
<svg class="led" style="left:62px;top:38px" width="29" height="29" viewBox="0 0 29 29"><circle cx="14.20" cy="14.40" r="12.85" fill="#717171"/><circle cx="14.20" cy="14.40" r="11.18" fill="url(#ledFill)"/><path d="M14.20 2.83Q15.23 3.09 21.27 7.72Q15.23 12.09 14.20 12.47Q13.17 12.09 7.13 7.72Q13.17 3.09 14.20 2.83Z" fill="url(#ledHi)"/></svg>
<span class="t g" style="left:7.10px;top:78px;color:#000;transform:scaleX(0.9167);">Relay 3</span>
<svg class="led" style="left:62px;top:71px" width="29" height="29" viewBox="0 0 29 29"><circle cx="14.20" cy="14.40" r="12.85" fill="#717171"/><circle cx="14.20" cy="14.40" r="11.18" fill="url(#ledFill)"/><path d="M14.20 2.83Q15.23 3.09 21.27 7.72Q15.23 12.09 14.20 12.47Q13.17 12.09 7.13 7.72Q13.17 3.09 14.20 2.83Z" fill="url(#ledHi)"/></svg>
<span class="t g" style="left:7.10px;top:111px;color:#000;transform:scaleX(0.9167);">Relay 4</span>
<svg class="led" style="left:62px;top:104px" width="29" height="29" viewBox="0 0 29 29"><circle cx="14.20" cy="14.40" r="12.85" fill="#717171"/><circle cx="14.20" cy="14.40" r="11.18" fill="url(#ledFill)"/><path d="M14.20 2.83Q15.23 3.09 21.27 7.72Q15.23 12.09 14.20 12.47Q13.17 12.09 7.13 7.72Q13.17 3.09 14.20 2.83Z" fill="url(#ledHi)"/></svg>
</div>
<div class="panel" style="left:9px;top:567px;width:544px;height:40px"><span class="t g" style="left:7.10px;top:12px;color:#000;transform:scaleX(0.9737);">Battery Connection Status:</span></div>
<div class="panel" style="left:9px;top:615px;width:544px;height:40px"><span class="t g" style="left:7.10px;top:12px;color:#000;transform:scaleX(0.8506);">PSU</span> <span class="t g" style="left:31.80px;top:12px;color:#000;transform:scaleX(0.9411);">PWM</span> <span class="t g" style="left:64.40px;top:12px;color:#000;transform:scaleX(0.9635);">Regulation:</span></div>
<div class="panel" style="left:561px;top:359px;width:469px;height:309px">
<svg class="led" style="left:5px;top:5px" width="29" height="29" viewBox="0 0 29 29"><circle cx="14.00" cy="14.60" r="12.85" fill="#717171"/><circle cx="14.00" cy="14.60" r="11.18" fill="url(#ledFill)"/><path d="M14.00 3.04Q15.03 3.29 21.07 7.92Q15.03 12.29 14.00 12.67Q12.97 12.29 6.93 7.92Q12.97 3.29 14.00 3.04Z" fill="url(#ledHi)"/></svg>
<span class="t g" style="left:40.60px;top:12px;color:#000;letter-spacing:1.664px;">Mains Failure</span> <span class="t g" style="left:136.30px;top:12px;color:#000;transform:scaleX(0.8512);">(AC)</span>
<svg class="led" style="left:5px;top:38px" width="29" height="29" viewBox="0 0 29 29"><circle cx="14.00" cy="14.60" r="12.85" fill="#717171"/><circle cx="14.00" cy="14.60" r="11.18" fill="url(#ledFill)"/><path d="M14.00 3.04Q15.03 3.29 21.07 7.92Q15.03 12.29 14.00 12.67Q12.97 12.29 6.93 7.92Q12.97 3.29 14.00 3.04Z" fill="url(#ledHi)"/></svg>
<span class="t g" style="left:40.00px;top:45px;color:#000;">Phase Failure</span>
<svg class="led" style="left:5px;top:71px" width="29" height="29" viewBox="0 0 29 29"><circle cx="14.00" cy="14.60" r="12.85" fill="#717171"/><circle cx="14.00" cy="14.60" r="11.18" fill="url(#ledFill)"/><path d="M14.00 3.04Q15.03 3.29 21.07 7.92Q15.03 12.29 14.00 12.67Q12.97 12.29 6.93 7.92Q12.97 3.29 14.00 3.04Z" fill="url(#ledHi)"/></svg>
<span class="t g" style="left:40.00px;top:78px;color:#000;">Fuse Failure</span>
<svg class="led" style="left:5px;top:104px" width="29" height="29" viewBox="0 0 29 29"><circle cx="14.00" cy="14.60" r="12.85" fill="#717171"/><circle cx="14.00" cy="14.60" r="11.18" fill="url(#ledFill)"/><path d="M14.00 3.04Q15.03 3.29 21.07 7.92Q15.03 12.29 14.00 12.67Q12.97 12.29 6.93 7.92Q12.97 3.29 14.00 3.04Z" fill="url(#ledHi)"/></svg>
<span class="t g" style="left:40.00px;top:111px;color:#000;transform:scaleX(0.9558);">PSU Undervoltage</span>
<svg class="led" style="left:5px;top:137px" width="29" height="29" viewBox="0 0 29 29"><circle cx="14.00" cy="14.60" r="12.85" fill="#717171"/><circle cx="14.00" cy="14.60" r="11.18" fill="url(#ledFill)"/><path d="M14.00 3.04Q15.03 3.29 21.07 7.92Q15.03 12.29 14.00 12.67Q12.97 12.29 6.93 7.92Q12.97 3.29 14.00 3.04Z" fill="url(#ledHi)"/></svg>
<span class="t g" style="left:40.00px;top:144px;color:#000;transform:scaleX(0.9556);">PSU Overvoltage</span>
<svg class="led" style="left:5px;top:170px" width="29" height="29" viewBox="0 0 29 29"><circle cx="14.00" cy="14.60" r="12.85" fill="#717171"/><circle cx="14.00" cy="14.60" r="11.18" fill="url(#ledFill)"/><path d="M14.00 3.04Q15.03 3.29 21.07 7.92Q15.03 12.29 14.00 12.67Q12.97 12.29 6.93 7.92Q12.97 3.29 14.00 3.04Z" fill="url(#ledHi)"/></svg>
<span class="t g" style="left:40.00px;top:177px;color:#000;transform:scaleX(0.9693);">Low System Voltage</span>
<svg class="led" style="left:5px;top:203px" width="29" height="29" viewBox="0 0 29 29"><circle cx="14.00" cy="14.60" r="12.85" fill="#717171"/><circle cx="14.00" cy="14.60" r="11.18" fill="url(#ledFill)"/><path d="M14.00 3.04Q15.03 3.29 21.07 7.92Q15.03 12.29 14.00 12.67Q12.97 12.29 6.93 7.92Q12.97 3.29 14.00 3.04Z" fill="url(#ledHi)"/></svg>
<span class="t g" style="left:40.00px;top:210px;color:#000;transform:scaleX(0.9951);">Low Voltage in Batterymode</span>
<svg class="led" style="left:5px;top:236px" width="29" height="29" viewBox="0 0 29 29"><circle cx="14.00" cy="14.60" r="12.85" fill="#717171"/><circle cx="14.00" cy="14.60" r="11.18" fill="url(#ledFill)"/><path d="M14.00 3.04Q15.03 3.29 21.07 7.92Q15.03 12.29 14.00 12.67Q12.97 12.29 6.93 7.92Q12.97 3.29 14.00 3.04Z" fill="url(#ledHi)"/></svg>
<span class="t g" style="left:40.00px;top:243px;color:#000;transform:scaleX(0.9624);">Charger Error</span>
<svg class="led" style="left:5px;top:269px" width="29" height="29" viewBox="0 0 29 29"><circle cx="14.00" cy="14.60" r="12.85" fill="#717171"/><circle cx="14.00" cy="14.60" r="11.18" fill="url(#ledFill)"/><path d="M14.00 3.04Q15.03 3.29 21.07 7.92Q15.03 12.29 14.00 12.67Q12.97 12.29 6.93 7.92Q12.97 3.29 14.00 3.04Z" fill="url(#ledHi)"/></svg>
<span class="t g" style="left:40.00px;top:276px;color:#000;transform:scaleX(0.9806);">Testload Missing</span>
<svg class="led" style="left:234px;top:5px" width="29" height="29" viewBox="0 0 29 29"><circle cx="14.50" cy="14.60" r="12.85" fill="#717171"/><circle cx="14.50" cy="14.60" r="11.18" fill="url(#ledFill)"/><path d="M14.50 3.04Q15.53 3.29 21.57 7.92Q15.53 12.29 14.50 12.67Q13.47 12.29 7.43 7.92Q13.47 3.29 14.50 3.04Z" fill="url(#ledHi)"/></svg>
<span class="t g" style="left:269.20px;top:12px;color:#000;transform:scaleX(0.9744);">Aged Batteries</span>
<svg class="led" style="left:234px;top:38px" width="29" height="29" viewBox="0 0 29 29"><circle cx="14.50" cy="14.60" r="12.85" fill="#818181"/><circle cx="14.50" cy="14.60" r="11.18" fill="url(#ledFillL)"/><path d="M14.50 3.04Q15.53 3.29 21.57 7.92Q15.53 12.29 14.50 12.67Q13.47 12.29 7.43 7.92Q13.47 3.29 14.50 3.04Z" fill="url(#ledHiL)"/></svg>
<span class="t g" style="left:269.20px;top:45px;color:#000;transform:scaleX(0.9514);">Battery Resting Phase</span>
<svg class="led" style="left:234px;top:71px" width="29" height="29" viewBox="0 0 29 29"><circle cx="14.50" cy="14.60" r="12.85" fill="#717171"/><circle cx="14.50" cy="14.60" r="11.18" fill="url(#ledFill)"/><path d="M14.50 3.04Q15.53 3.29 21.57 7.92Q15.53 12.29 14.50 12.67Q13.47 12.29 7.43 7.92Q13.47 3.29 14.50 3.04Z" fill="url(#ledHi)"/></svg>
<span class="t g" style="left:269.20px;top:78px;color:#000;transform:scaleX(0.9884);">Battery Time Warning</span>
<svg class="led" style="left:234px;top:104px" width="29" height="29" viewBox="0 0 29 29"><circle cx="14.50" cy="14.60" r="12.85" fill="#717171"/><circle cx="14.50" cy="14.60" r="11.18" fill="url(#ledFill)"/><path d="M14.50 3.04Q15.53 3.29 21.57 7.92Q15.53 12.29 14.50 12.67Q13.47 12.29 7.43 7.92Q13.47 3.29 14.50 3.04Z" fill="url(#ledHi)"/></svg>
<span class="t g" style="left:269.20px;top:111px;color:#000;transform:scaleX(0.9945);">Operating Time on Batteries</span>
<svg class="led" style="left:234px;top:137px" width="29" height="29" viewBox="0 0 29 29"><circle cx="14.50" cy="14.60" r="12.85" fill="#717171"/><circle cx="14.50" cy="14.60" r="11.18" fill="url(#ledFill)"/><path d="M14.50 3.04Q15.53 3.29 21.57 7.92Q15.53 12.29 14.50 12.67Q13.47 12.29 7.43 7.92Q13.47 3.29 14.50 3.04Z" fill="url(#ledHi)"/></svg>
<span class="t g" style="left:269.20px;top:144px;color:#000;transform:scaleX(0.9964);">Battery not fully Charged</span>
<svg class="led" style="left:234px;top:170px" width="29" height="29" viewBox="0 0 29 29"><circle cx="14.50" cy="14.60" r="12.85" fill="#717171"/><circle cx="14.50" cy="14.60" r="11.18" fill="url(#ledFill)"/><path d="M14.50 3.04Q15.53 3.29 21.57 7.92Q15.53 12.29 14.50 12.67Q13.47 12.29 7.43 7.92Q13.47 3.29 14.50 3.04Z" fill="url(#ledHi)"/></svg>
<span class="t g" style="left:269.20px;top:177px;color:#000;transform:scaleX(0.9276);">Faulty Fan</span>
<svg class="led" style="left:234px;top:203px" width="29" height="29" viewBox="0 0 29 29"><circle cx="14.50" cy="14.60" r="12.85" fill="#717171"/><circle cx="14.50" cy="14.60" r="11.18" fill="url(#ledFill)"/><path d="M14.50 3.04Q15.53 3.29 21.57 7.92Q15.53 12.29 14.50 12.67Q13.47 12.29 7.43 7.92Q13.47 3.29 14.50 3.04Z" fill="url(#ledHi)"/></svg>
<span class="t g" style="left:269.20px;top:210px;color:#000;transform:scaleX(0.9869);">Sensor error, temperature</span>
<svg class="led" style="left:234px;top:236px" width="29" height="29" viewBox="0 0 29 29"><circle cx="14.50" cy="14.60" r="12.85" fill="#717171"/><circle cx="14.50" cy="14.60" r="11.18" fill="url(#ledFill)"/><path d="M14.50 3.04Q15.53 3.29 21.57 7.92Q15.53 12.29 14.50 12.67Q13.47 12.29 7.43 7.92Q13.47 3.29 14.50 3.04Z" fill="url(#ledHi)"/></svg>
<span class="t g" style="left:269.20px;top:243px;color:#000;transform:scaleX(0.9940);">High Temperature</span>
<svg class="led" style="left:234px;top:269px" width="29" height="29" viewBox="0 0 29 29"><circle cx="14.50" cy="14.60" r="12.85" fill="#717171"/><circle cx="14.50" cy="14.60" r="11.18" fill="url(#ledFill)"/><path d="M14.50 3.04Q15.53 3.29 21.57 7.92Q15.53 12.29 14.50 12.67Q13.47 12.29 7.43 7.92Q13.47 3.29 14.50 3.04Z" fill="url(#ledHi)"/></svg>
<span class="t g" style="left:269.20px;top:276px;color:#000;transform:scaleX(0.9795);">Low Temperature</span>
</div>
</main>
<footer id="status"><span class="t g" style="left:0.70px;top:3px;color:#000;transform:scaleX(0.9885);">Bootloader is running...</span></footer>
<div id="dlgshadow"></div>
<section id="dialog">
<div id="dlgtitle"><h2 class="t" style="left:7.80px;top:7px;color:#000;transform:scaleX(0.9764);">Firmware upgrade status</h2></div>
<div id="log"><p class="t g" style="left:1.40px;top:2px;color:#000;transform:scaleX(0.9815);">Starting Bootloader...</p><p class="t g" style="left:1.40px;top:18px;color:#000;transform:scaleX(0.9852);">Bootloader is running...</p><p class="t g" style="left:1.40px;top:34px;color:#000;transform:scaleX(0.9704);">Programming...</p></div>
<div id="prog"><div id="bar"></div><span class="t g" style="left:155.70px;top:1px;color:#000;transform:scaleX(0.8991);">7,9%</span></div>
<button id="ok" disabled><span class="t g" style="left:31.10px;top:3px;color:#737373;transform:scaleX(0.9110);">OK</span></button>
</section>
</div>
</body>
</html>
